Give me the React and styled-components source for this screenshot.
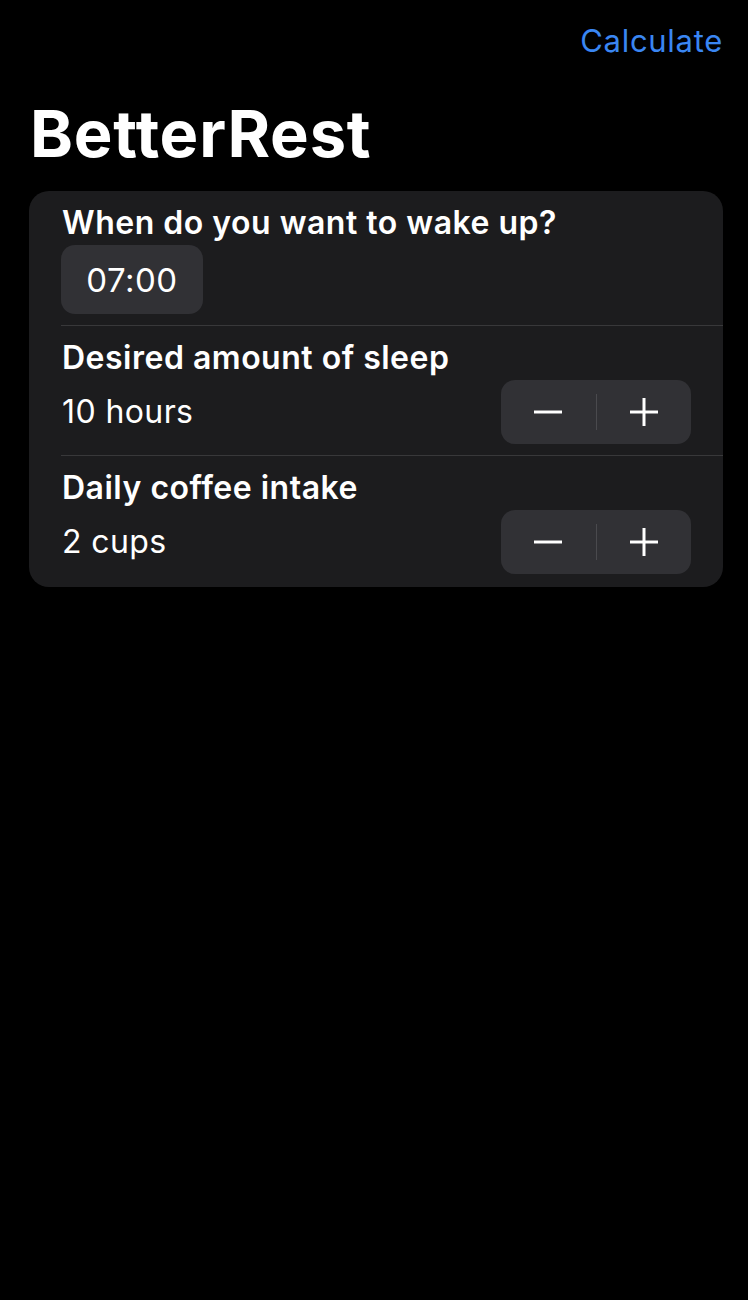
import React from 'react';
import styled, { createGlobalStyle } from 'styled-components';

const GlobalStyle = createGlobalStyle`
  html, body {
    margin: 0;
    padding: 0;
    background: #000;
  }
  body {
    font-family: Inter, "Liberation Sans", sans-serif;
    color: #fff;
    -webkit-font-smoothing: antialiased;
  }
`;

export default function App() {
  return (
    <>
      <GlobalStyle />
      <Screen>
        <NavBar>
          <NavButton>Calculate</NavButton>
        </NavBar>
        <LargeTitle>BetterRest</LargeTitle>
        <FormCard>
          <FormRow>
            <RowLabel>When do you want to wake up?</RowLabel>
            <TimePill>07:00</TimePill>
          </FormRow>
          <FormRow>
            <RowLabel>Desired amount of sleep</RowLabel>
            <StepperLine>
              <RowValue>10 hours</RowValue>
              <Stepper />
            </StepperLine>
          </FormRow>
          <FormRow last>
            <RowLabel>Daily coffee intake</RowLabel>
            <StepperLine>
              <RowValue>2 cups</RowValue>
              <Stepper />
            </StepperLine>
          </FormRow>
        </FormCard>
      </Screen>
    </>
  );
}

function Stepper() {
  return (
    <StepperBox>
      <StepButton aria-label="Decrement">
        <svg width="30" height="30" viewBox="0 0 30 30">
          <line x1="1" y1="15" x2="29" y2="15" stroke="#fff" strokeWidth="3" />
        </svg>
      </StepButton>
      <StepDivider />
      <StepButton aria-label="Increment">
        <svg width="30" height="30" viewBox="0 0 30 30">
          <line x1="1" y1="15" x2="29" y2="15" stroke="#fff" strokeWidth="3" />
          <line x1="15" y1="1" x2="15" y2="29" stroke="#fff" strokeWidth="3" />
        </svg>
      </StepButton>
    </StepperBox>
  );
}

const Screen = styled.div`
  width: 748px;
  min-height: 1300px;
  background: #000;
  display: flex;
  flex-direction: column;
`;
const NavBar = styled.div`
  display: flex;
  justify-content: flex-end;
  padding: 23px 25px 0 0;
`;
const NavButton = styled.button`
  background: none;
  border: none;
  padding: 0;
  font-family: Inter, "Liberation Sans", sans-serif;
  font-size: 31px;
  line-height: 36px;
  color: #3a86f2;
  letter-spacing: 0.7px;
  cursor: pointer;
`;
const LargeTitle = styled.h1`
  margin: 37px 0 0 30px;
  font-size: 65px;
  line-height: 76px;
  font-weight: 700;
  letter-spacing: 0.8px;
`;
const FormCard = styled.div`
  margin: 19px 25px 0 29px;
  background: #1c1c1e;
  border-radius: 20px;
  padding: 0 0 2px 32px;
`;
const FormRow = styled.div`
  display: flex;
  flex-direction: column;
  gap: 3px;
  padding: 13px 32px 11px 1px;
  border-bottom: ${(p) => (p.last ? 'none' : '1px solid #38383a')};
`;
const RowLabel = styled.div`
  font-size: 32px;
  line-height: 38px;
  font-weight: 600;
  letter-spacing: 0.5px;
`;
const RowValue = styled.div`
  font-size: 32px;
  line-height: 38px;
  font-weight: 400;
  letter-spacing: 0.4px;
`;
const TimePill = styled.div`
  width: 142px;
  height: 69px;
  border-radius: 14px;
  background: #313135;
  display: flex;
  align-items: center;
  justify-content: center;
  font-size: 33px;
  font-weight: 400;
  letter-spacing: 0.5px;
  margin-left: -1px;
`;
const StepperLine = styled.div`
  display: flex;
  align-items: center;
  justify-content: space-between;
`;
const StepperBox = styled.div`
  width: 190px;
  height: 64px;
  border-radius: 14px;
  background: #313135;
  display: flex;
  align-items: center;
`;
const StepButton = styled.button`
  flex: 1;
  height: 100%;
  background: none;
  border: none;
  padding: 0;
  display: flex;
  align-items: center;
  justify-content: center;
  cursor: pointer;
`;
const StepDivider = styled.div`
  width: 1px;
  height: 36px;
  background: #4a4a4e;
`;
